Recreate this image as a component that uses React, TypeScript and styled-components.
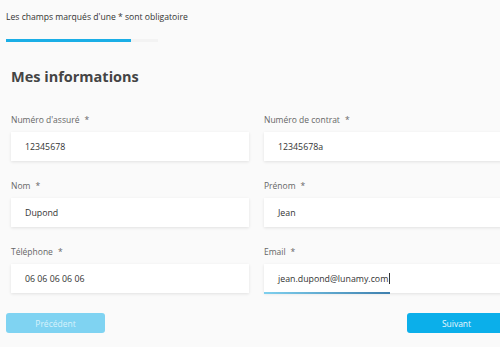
import React from "react";
import styled, { createGlobalStyle } from "styled-components";

const Global = createGlobalStyle`
  html, body { margin: 0; padding: 0; background: #fafafa; overflow: hidden; }
  body { font-family: "Open Sans", "Noto Sans", sans-serif; color: #333; }
  * { box-sizing: border-box; }
`;

const Page = styled.div`
  width: 500px;
  height: 347px;
  padding: 0 0 0 6px;
  overflow: hidden;
  display: flex;
  flex-direction: column;
`;

const Notice = styled.p`
  margin: 11px 0 0;
  font-size: 8.6px;
  line-height: 12px;
  color: #333;
`;

const Track = styled.div`
  margin-top: 16px;
  width: 152px;
  height: 3px;
  background: #f3f3f3;
`;

const Fill = styled.div`
  height: 100%;
  background: #1aaee6;
`;

const Title = styled.h2`
  margin: 25px 0 0 5px;
  font-size: 14.5px;
  font-weight: 700;
  color: #444;
  line-height: 20px;
`;

const Grid = styled.div`
  margin: 27px 0 0 5px;
  display: grid;
  grid-template-columns: 238px 238px;
  column-gap: 15px;
  row-gap: 19px;
`;

const Field = styled.div`
  display: flex;
  flex-direction: column;
`;

const Label = styled.label`
  font-size: 8.5px;
  line-height: 12px;
  color: #666;
  margin-bottom: 6px;
  & span { margin-left: 5px; }
`;

const InputBox = styled.div<{ $focus?: boolean }>`
  position: relative;
  height: 29px;
  background: #fff;
  box-shadow: 0 1px 3px rgba(0, 0, 0, 0.1);
  display: flex;
  align-items: center;
  padding-left: 14px;
  font-size: 8.8px;
  color: #333;
`;

const Underline = styled.div`
  position: absolute;
  left: 0;
  bottom: -1px;
  width: 126px;
  height: 2px;
  background: linear-gradient(90deg, #7fd0ee, #3e7fae);
`;

const Caret = styled.span`
  display: inline-block;
  width: 1px;
  height: 11px;
  background: #333;
  margin-left: 1px;
`;

const Actions = styled.div`
  margin-top: 20px;
  display: flex;
  justify-content: space-between;
  width: 500px;
`;

const Button = styled.button<{ $disabled?: boolean }>`
  width: 99px;
  height: 20px;
  border: none;
  border-radius: 3px;
  background: ${(p) => (p.$disabled ? "#7fd3f2" : "#0bafea")};
  color: ${(p) => (p.$disabled ? "#d9f2fb" : "#e8f7fd")};
  font-family: inherit;
  font-size: 8.5px;
  padding: 0;
`;

const fields = [
  { label: "Numéro d'assuré", value: "12345678" },
  { label: "Numéro de contrat", value: "12345678a" },
  { label: "Nom", value: "Dupond" },
  { label: "Prénom", value: "Jean" },
  { label: "Téléphone", value: "06 06 06 06 06" },
  { label: "Email", value: "jean.dupond@lunamy.com", focus: true },
];

export default function App() {
  return (
    <>
      <Global />
      <Page>
        <Notice>Les champs marqués d'une * sont obligatoire</Notice>
        <Track>
          <Fill style={{ width: "82%" }} />
        </Track>
        <Title>Mes informations</Title>
        <Grid>
          {fields.map((f) => (
            <Field key={f.label}>
              <Label>
                {f.label}
                <span>*</span>
              </Label>
              <InputBox $focus={f.focus}>
                {f.value}
                {f.focus && <Caret />}
                {f.focus && <Underline />}
              </InputBox>
            </Field>
          ))}
        </Grid>
        <Actions>
          <Button $disabled>Précédent</Button>
          <Button>Suivant</Button>
        </Actions>
      </Page>
    </>
  );
}
